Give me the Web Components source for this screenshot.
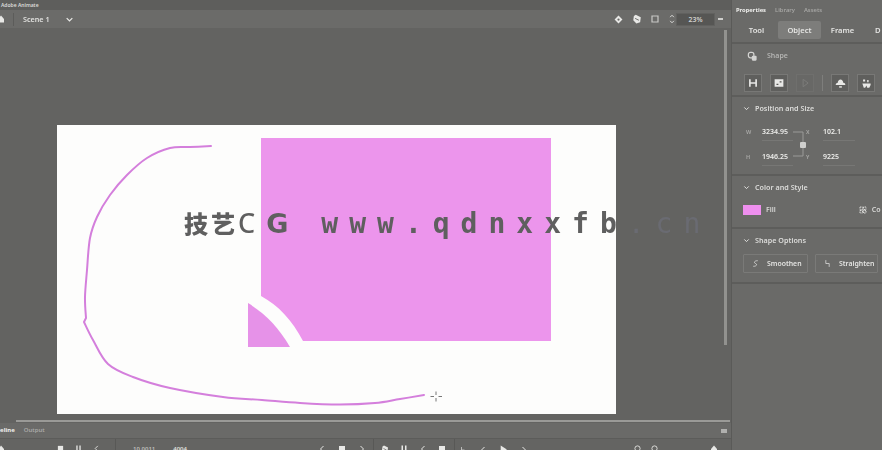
<!DOCTYPE html>
<html>
<head>
<meta charset="utf-8">
<title>Editor</title>
<style>
  html, body { margin: 0; height: 100%; background: #646462; overflow: hidden; }
  body { font-family: "Noto Sans", "Liberation Sans", sans-serif; }
</style>
</head>
<body>
<editor-app></editor-app>
<script>
// small icon set, all drawn on a 16x16 box
const ICONS = {
  chevron: '<path d="M3 5.5l5 5 5-5" fill="none" stroke="currentColor" stroke-width="2.2"/>',
  diamond: '<path d="M8 1l7 7-7 7-7-7z" fill="currentColor"/><circle cx="8" cy="8" r="2" fill="#6a6a68"/>',
  layers: '<path d="M6 1l8 4-1 8-6 2-5-5 1-7z" fill="currentColor"/><path d="M5 7l6 3" stroke="#6a6a68" stroke-width="1.5"/>',
  frame: '<path d="M2 2h12v12H2z" fill="none" stroke="currentColor" stroke-width="2.4" opacity=".75"/>',
  stepper: '<path d="M5 5l3-3 3 3M5 11l3 3 3-3" fill="none" stroke="currentColor" stroke-width="1.4"/>',
  shapes: '<rect x="2" y="2" width="8" height="8" rx="3" fill="none" stroke="currentColor" stroke-width="1.8"/><rect x="7" y="7" width="7" height="7" rx="1.5" fill="currentColor"/>',
  letter: '<path d="M3 2v12M13 2v12M3 8h10" fill="none" stroke="currentColor" stroke-width="2.6"/>',
  image: '<rect x="1" y="2" width="14" height="12" fill="currentColor"/><path d="M4 9h3v2H4zM9 5h3v2H9z" fill="#555553"/>',
  play: '<path d="M5 2l8 6-8 6z" fill="none" stroke="currentColor" stroke-width="1.6"/>',
  cloud: '<path d="M1 10c0-2 2-3 3-3 0-3 2-5 4-5s4 2 4 5c2 0 3 1 3 3z" fill="currentColor"/><path d="M6 12h4v2H6z" fill="currentColor"/>',
  nodes: '<path d="M3 2h3v3H3zM9 3h2v3H9zM2 8h12v2l-2 4h-3l-1-3-2 3H4z" fill="currentColor"/>',
  grid: '<path d="M2 2h5v5H2zM9 2h5v5H9zM2 9h5v5H2zM9 9h5v5H9z" fill="none" stroke="currentColor" stroke-width="2" stroke-dasharray="2 1"/>',
  smooth: '<path d="M12 3C5 3 5 7 8 8s3 5-4 5" fill="none" stroke="currentColor" stroke-width="1.3"/>',
  straight: '<path d="M5 2v6h6v6" fill="none" stroke="currentColor" stroke-width="1.3"/>',
  square: '<path d="M2 2h12v12H2z" fill="currentColor"/>',
  back: '<path d="M11 2L5 8l6 6" fill="none" stroke="currentColor" stroke-width="2"/>',
  fwd: '<path d="M5 2l6 6-6 6" fill="none" stroke="currentColor" stroke-width="2"/>',
  tri: '<path d="M3 1l11 7-11 7z" fill="currentColor"/>',
  bars: '<path d="M3 1h3v14H3zM10 1h3v14h-3z" fill="currentColor"/>',
  dot: '<circle cx="8" cy="8" r="6" fill="none" stroke="currentColor" stroke-width="2"/>',
  home: '<path d="M8 1l6 7v7H2V8z" fill="currentColor"/>'
};

// catmull-rom through the points, so the hand drawn stroke has no corners
function smoothPath(pts) {
  let d = `M${pts[0][0]} ${pts[0][1]}`;
  for (let i = 0; i < pts.length - 1; i++) {
    const p0 = pts[i - 1] || pts[i], p1 = pts[i], p2 = pts[i + 1], p3 = pts[i + 2] || p2;
    const c1x = p1[0] + (p2[0] - p0[0]) / 6, c1y = p1[1] + (p2[1] - p0[1]) / 6;
    const c2x = p2[0] - (p3[0] - p1[0]) / 6, c2y = p2[1] - (p3[1] - p1[1]) / 6;
    d += `C${c1x.toFixed(1)} ${c1y.toFixed(1)} ${c2x.toFixed(1)} ${c2y.toFixed(1)} ${p2[0]} ${p2[1]}`;
  }
  return d;
}

class UiIcon extends HTMLElement {
  connectedCallback() {
    const size = this.getAttribute("size") || 12;
    this.attachShadow({ mode: "open" });
    this.shadowRoot.innerHTML = `
      <style>
        :host { display: inline-flex; flex: none; width: ${size}px; height: ${size}px; color: inherit; }
        svg { width: 100%; height: 100%; display: block; }
      </style>
      <svg viewBox="0 0 16 16">${ICONS[this.getAttribute("name")] || ""}</svg>`;
  }
}

class EditorApp extends HTMLElement {
  connectedCallback() {
    this.attachShadow({ mode: "open" });
    this.shadowRoot.innerHTML = `
      <style>
        :host {
          display: grid;
          grid-template-columns: 731px 151px;
          width: 882px;
          height: 450px;
          position: relative;
          overflow: hidden;
          color: #e4e4e2;
        }
        .main { display: flex; flex-direction: column; min-width: 0; height: 450px; filter: blur(.45px); }
        editor-panel { filter: blur(.45px); }
        .mark {
          position: absolute;
          left: 184px;
          top: 206px;
          white-space: nowrap;
          font: 700 28px/34px "DejaVu Sans Mono", "Noto Sans CJK SC", monospace;
          color: #5f5f5f;
          pointer-events: none;
          filter: blur(.3px);
        }
        .cjk { font-family: "Noto Sans CJK SC", sans-serif; font-size: 24px; font-weight: 900; letter-spacing: 3px; }
        .latin { font-family: "Noto Sans", sans-serif; font-size: 27px; letter-spacing: 11px; font-weight: 500; }
        .g { font-family: "DejaVu Sans", sans-serif; font-weight: 700; letter-spacing: 0; }
        .url { letter-spacing: 11px; margin-left: 33px; }
        .tld { color: #6a6b72; font-weight: 400; }
      </style>
      <div class="main">
        <editor-titlebar></editor-titlebar>
        <editor-toolbar></editor-toolbar>
        <editor-canvas></editor-canvas>
        <editor-timeline></editor-timeline>
      </div>
      <editor-panel></editor-panel>
      <div class="mark"><span class="cjk">技艺</span><span class="latin">C<span class="g">G</span></span><span class="url">www.qdnxxfb<span class="tld">.cn</span></span></div>`;
  }
}

class EditorTitlebar extends HTMLElement {
  connectedCallback() {
    this.attachShadow({ mode: "open" });
    this.shadowRoot.innerHTML = `
      <style>
        :host {
          display: flex; align-items: center; height: 10px; flex: none;
          background: #5e5e5c; padding-left: 1px;
          font: 600 5px/10px "Noto Sans", sans-serif;
          color: #dcdcda; white-space: nowrap; overflow: hidden;
        }
      </style>
      <span>Adobe Animate</span>`;
  }
}

class EditorToolbar extends HTMLElement {
  connectedCallback() {
    this.attachShadow({ mode: "open" });
    this.shadowRoot.innerHTML = `
      <style>
        :host {
          display: flex; align-items: center; height: 18px; flex: none;
          background: #6b6b69; color: #e8e8e6; box-sizing: border-box;
          font: 600 7.2px/18px "Noto Sans", sans-serif;
        }
        .home { margin-left: -3px; }
        .sep { width: 1px; height: 13px; background: #5c5c5a; margin: 0 8px 0 8px; }
        .scene { width: 42px; margin-left: 1px; opacity: .95; }
        .right { margin-left: auto; display: flex; align-items: center; gap: 9px; }
        .stepper { margin-left: -1px; }
        .zoom {
          width: 39px; height: 13px; background: #565654; box-sizing: border-box;
          font: 600 7px/12px "Noto Sans", sans-serif; text-align: center; color: #cfcfcd;
          margin-left: -10px; border: 1px solid #61615f;
        }
        .caret { width: 5px; height: 2px; background: #cfcfcd; margin: 0 8px 0 -6px; }
      </style>
      <ui-icon class="home" name="home" size="8"></ui-icon>
      <div class="sep"></div>
      <span class="scene">Scene 1</span>
      <ui-icon name="chevron" size="9"></ui-icon>
      <div class="right">
        <ui-icon name="diamond" size="9"></ui-icon>
        <ui-icon name="layers" size="10"></ui-icon>
        <ui-icon name="frame" size="8"></ui-icon>
        <ui-icon class="stepper" name="stepper" size="10"></ui-icon>
        <div class="zoom">23%</div>
        <div class="caret"></div>
      </div>`;
  }
}

class EditorCanvas extends HTMLElement {
  connectedCallback() {
    const upper = [[211,146],[190,147],[170,148],[147,158],[127,175],[110,195],[97,217],[90,238],[87,270],[85,297],[86,318]];
    const lower = [[84,322],[93,340],[108,364],[133,377],[170,388],[223,397],[262,400],[300,403],[340,404.5],[375,403],[400,399],[424,395]];
    this.attachShadow({ mode: "open" });
    this.shadowRoot.innerHTML = `
      <style>
        :host { display: block; flex: 1; min-height: 0; position: relative; background: #636361; padding: 97px 0 0 57px; box-sizing: border-box; }
        .board { width: 559px; height: 289px; background: #fdfdfc; overflow: hidden; }
        svg { display: block; width: 560px; height: 289px; }
        .vbar { position: absolute; right: 4px; top: 2px; width: 3px; height: 315px; background: #92928f; }
      </style>
      <div class="board">
        <svg viewBox="57 125 560 289">
          <path d="M261 138H551V341H303C292 320 279 306 261 296Z" fill="#ec95ec"/>
          <path d="M248 303C266 314 279 328 290 347H248Z" fill="#e692e8"/>
          <path d="${smoothPath(upper)}L84 322${smoothPath(lower).replace(/^M[^C]+/, "")}" fill="none" stroke="#d47fdc" stroke-width="2" stroke-linejoin="round" stroke-linecap="round"/>
          <path d="M436 391.5v3.500M436 398v3.500M430.500 396.500h3.500M438.500 396.500h3.500" stroke="#777" stroke-width="1"/>
        </svg>
      </div>
      <div class="vbar"></div>`;
  }
}

class EditorTimeline extends HTMLElement {
  connectedCallback() {
    this.attachShadow({ mode: "open" });
    this.shadowRoot.innerHTML = `
      <style>
        :host { display: block; flex: none; height: 36px; background: #636361; color: #e8e8e6; overflow: hidden; }
        .scroll { height: 2px; margin: 6px 1px 0 16px; background: #9a9a97; }
        .tabs {
          height: 15px; margin-top: 1px; background: #6a6a68; display: flex; align-items: center;
          font: 600 6px/15px "Noto Sans", sans-serif; color: #a9a9a7; overflow: hidden;
        }
        .tabs b { margin-left: -11px; color: #f0f0ee; font-weight: 700; }
        .tabs span { margin-left: 9px; }
        .tabs i { margin-left: auto; margin-right: 4px; width: 6px; height: 4px; background: #b0b0ae; }
        .tools {
          height: 12px; background: #646462; display: flex; align-items: flex-start; padding-top: 6px;
          box-sizing: border-box; overflow: hidden; border-top: 1px solid #5c5c5a;
        }
        .group { display: flex; gap: 11px; align-items: center; flex: none; }
        .sep { width: 1px; height: 12px; margin-top: -6px; background: #585856; flex: none; }
        .time { font: 600 6px/8px "Noto Sans", sans-serif; color: #bdbdbb; flex: none; }
      </style>
      <div class="scroll"></div>
      <div class="tabs"><b>Timeline</b><span>Output</span><i></i></div>
      <div class="tools">
        <div class="group" style="margin-left:-3px"><ui-icon name="home" size="8"></ui-icon></div>
        <div class="group" style="margin-left:52px"><ui-icon name="square" size="7"></ui-icon><ui-icon name="bars" size="7"></ui-icon><ui-icon name="back" size="7"></ui-icon></div>
        <div class="sep" style="margin-left:15px"></div>
        <span class="time" style="margin-left:17px">10.0011</span>
        <span class="time" style="margin-left:18px;color:#e0e0de">4004</span>
        <div class="group" style="margin-left:131px;gap:12px"><ui-icon name="back" size="8"></ui-icon><ui-icon name="square" size="8"></ui-icon><ui-icon name="fwd" size="8"></ui-icon></div>
        <div class="sep" style="margin-left:7px"></div>
        <div class="group" style="margin-left:7px"><ui-icon name="layers" size="8"></ui-icon><ui-icon name="bars" size="8"></ui-icon><ui-icon name="back" size="8"></ui-icon><ui-icon name="square" size="8"></ui-icon></div>
        <div class="sep" style="margin-left:8px"></div>
        <div class="group" style="margin-left:4px;gap:12px"><ui-icon name="straight" size="8"></ui-icon><ui-icon name="back" size="8"></ui-icon><ui-icon name="tri" size="9"></ui-icon><ui-icon name="fwd" size="8"></ui-icon></div>
        <div class="group" style="margin-left:106px;gap:10px"><ui-icon name="dot" size="7"></ui-icon><ui-icon name="dot" size="7"></ui-icon></div>
        <div class="group" style="margin-left:52px"><ui-icon name="home" size="8"></ui-icon></div>
      </div>`;
  }
}

class PanelSection extends HTMLElement {
  connectedCallback() {
    this.attachShadow({ mode: "open" });
    this.shadowRoot.innerHTML = `
      <style>
        :host { display: block; box-sizing: border-box; border-bottom: 2px solid #5d5d5b; }
        .head { display: flex; align-items: center; gap: 5px; height: 22px; padding-left: 11px; font: 600 7.2px/22px "Noto Sans", sans-serif; color: #dcdcda; }
        ui-icon { color: #e4e4e2; }
      </style>
      <div class="head"><ui-icon name="chevron" size="7"></ui-icon><span>${this.getAttribute("heading") || ""}</span></div>
      <slot></slot>`;
  }
}

class ToolSquare extends HTMLElement {
  connectedCallback() {
    this.attachShadow({ mode: "open" });
    this.shadowRoot.innerHTML = `
      <style>
        :host { display: flex; align-items: center; justify-content: center; width: 18px; height: 18px; box-sizing: border-box; border: 1px solid #787876; background: #5f5f5d; color: #e8e8e6; flex: none; }
        :host([dim]) { background: #686866; border-color: #6f6f6d; color: #7b7b79; }
      </style>
      <slot></slot>`;
  }
}

class PanelButton extends HTMLElement {
  connectedCallback() {
    this.attachShadow({ mode: "open" });
    this.shadowRoot.innerHTML = `
      <style>
        :host { display: flex; align-items: center; gap: 7px; height: 19px; box-sizing: border-box; border: 1px solid #7a7a78; border-radius: 1px; padding-left: 7px; font: 600 6.9px/17px "Noto Sans", sans-serif; color: #e4e4e2; white-space: nowrap; overflow: hidden; }
      </style>
      <slot></slot>`;
  }
}

class EditorPanel extends HTMLElement {
  connectedCallback() {
    this.attachShadow({ mode: "open" });
    this.shadowRoot.innerHTML = `
      <style>
        :host {
          display: block; height: 450px; background: #6a6a68; box-sizing: border-box;
          border-left: 1px solid #5a5a58; color: #e4e4e2; overflow: hidden;
        }
        .tabs { display: flex; gap: 9px; height: 18px; padding: 1px 0 0 4px; box-sizing: border-box; font: 600 5.8px/18px "Noto Sans", sans-serif; color: #a6a6a4; white-space: nowrap; }
        .tabs b { color: #f0f0ee; font-weight: 700; }
        .modes { display: flex; align-items: center; height: 24px; font: 600 7.6px/18px "Noto Sans", sans-serif; border-bottom: 2px solid #5d5d5b; white-space: nowrap; padding-left: 3px; }
        .modes span { width: 43px; text-align: center; flex: none; height: 18px; border-radius: 2px; }
        .modes .on { background: #7d7d7b; }
        .modes .cut { width: auto; margin-left: 11px; }
        .shape { display: flex; align-items: center; gap: 9px; height: 24px; padding-left: 15px; box-sizing: border-box; font: 600 7px/24px "Noto Sans", sans-serif; color: #b4b4b2; }
        .shape ui-icon { color: #d4d4d2; }
        .tools { display: flex; align-items: center; gap: 8px; padding: 6px 0 3px 12px; border-bottom: 2px solid #5d5d5b; }
        .tools i { width: 1px; height: 16px; background: #7e7e7c; }
        .pos { display: grid; grid-template-columns: 19px 31px 30px 32px; grid-template-rows: 16px 16px; row-gap: 9px; padding: 5px 0 9px 11px; font: 600 7px/16px "Noto Sans", sans-serif; position: relative; }
        .pos span { color: #a9a9a7; font-size: 5.5px; padding-left: 3px; }
        .pos span.lab2 { padding-left: 13px; }
        .pos div { border-bottom: 1px solid #777775; height: 16px; white-space: nowrap; color: #ececea; }
        .pos svg { position: absolute; left: 61px; top: 9px; width: 20px; height: 34px; }
        .fill { display: flex; align-items: center; height: 24px; padding: 0 0 5px 11px; font: 600 7px/24px "Noto Sans", sans-serif; color: #d8d8d6; white-space: nowrap; }
        .fill i { width: 18px; height: 10px; background: #ee8fee; margin-right: 5px; flex: none; }
        .fill ui-icon { margin-left: 83px; margin-right: 5px; }
        .btns { display: grid; grid-template-columns: 65px 63px; gap: 7px; padding: 3px 0 9px 11px; }
      </style>
      <div class="tabs"><b>Properties</b><span>Library</span><span>Assets</span></div>
      <div class="modes"><span>Tool</span><span class="on">Object</span><span>Frame</span><span class="cut">D</span></div>
      <div class="shape"><ui-icon name="shapes" size="11"></ui-icon><span>Shape</span></div>
      <div class="tools">
        <tool-square><ui-icon name="letter" size="10"></ui-icon></tool-square>
        <tool-square><ui-icon name="image" size="10"></ui-icon></tool-square>
        <tool-square dim><ui-icon name="play" size="10"></ui-icon></tool-square>
        <i></i>
        <tool-square><ui-icon name="cloud" size="11"></ui-icon></tool-square>
        <tool-square><ui-icon name="nodes" size="11"></ui-icon></tool-square>
      </div>
      <panel-section heading="Position and Size">
        <div class="pos">
          <span>W</span><div>3234.95</div><span class="lab2">X</span><div>102.1</div>
          <span>H</span><div>1946.25</div><span class="lab2">Y</span><div>9225</div>
          <svg viewBox="0 0 20 34"><path d="M0 4h10v10M0 28h10V20" fill="none" stroke="#9a9a98"/><rect x="7" y="14" width="6" height="6" rx="1" fill="#cfcfcd"/></svg>
        </div>
      </panel-section>
      <panel-section heading="Color and Style">
        <div class="fill"><i></i><span>Fill</span><ui-icon name="grid" size="8"></ui-icon><span>Co</span></div>
      </panel-section>
      <panel-section heading="Shape Options">
        <div class="btns">
          <panel-button><ui-icon name="smooth" size="9"></ui-icon>Smoothen</panel-button>
          <panel-button><ui-icon name="straight" size="9"></ui-icon>Straighten</panel-button>
        </div>
      </panel-section>`;
  }
}

customElements.define("ui-icon", UiIcon);
customElements.define("tool-square", ToolSquare);
customElements.define("panel-button", PanelButton);
customElements.define("panel-section", PanelSection);
customElements.define("editor-titlebar", EditorTitlebar);
customElements.define("editor-toolbar", EditorToolbar);
customElements.define("editor-canvas", EditorCanvas);
customElements.define("editor-timeline", EditorTimeline);
customElements.define("editor-panel", EditorPanel);
customElements.define("editor-app", EditorApp);
</script>
</body>
</html>
